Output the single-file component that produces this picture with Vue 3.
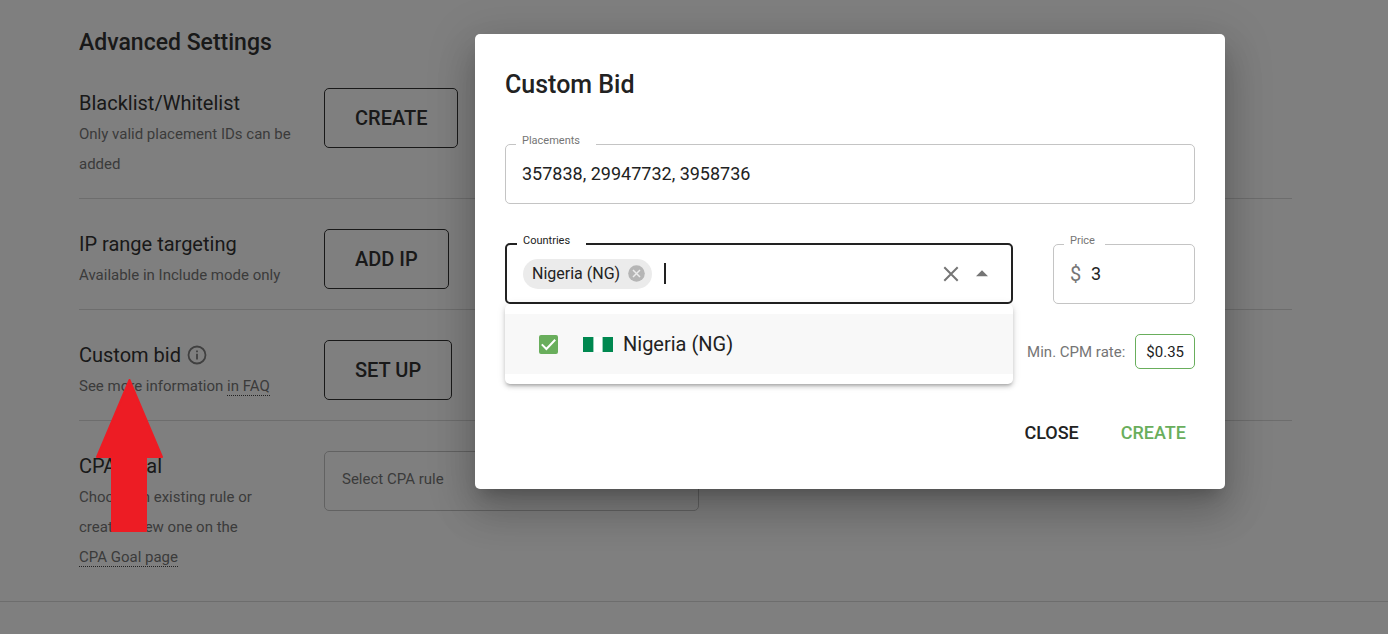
<script setup>
import { ref } from 'vue'

const placements = ref('357838, 29947732, 3958736')
const search = ref('')
const price = ref('3')
const checked = ref(true)
</script>

<template>
  <div class="page">
    <main class="settings">
      <h1 class="heading">Advanced Settings</h1>

      <section class="row">
        <div class="about">
          <h2>Blacklist/Whitelist</h2>
          <p>Only valid placement IDs can be added</p>
        </div>
        <button class="outlined" type="button">CREATE</button>
      </section>

      <section class="row">
        <div class="about">
          <h2>IP range targeting</h2>
          <p>Available in Include mode only</p>
        </div>
        <button class="outlined" type="button">ADD IP</button>
      </section>

      <section class="row">
        <div class="about">
          <h2>
            Custom bid
            <svg class="info" viewBox="0 0 20 20" aria-hidden="true">
              <circle cx="10" cy="10" r="8.5" fill="none" stroke="currentColor" stroke-width="1.8" />
              <path d="M9.1 5.4h1.8v1.8H9.1zM9.1 8.8h1.8v5.6H9.1z" fill="currentColor" />
            </svg>
          </h2>
          <p>See more information <a href="#faq">in FAQ</a></p>
        </div>
        <button class="outlined" type="button">SET UP</button>
      </section>

      <section class="row last">
        <div class="about">
          <h2>CPA Goal</h2>
          <p>Choose an existing rule or create a new one on the <a href="#cpa">CPA Goal page</a></p>
        </div>
        <select class="rule" aria-label="CPA rule">
          <option>Select CPA rule</option>
        </select>
      </section>
    </main>
    <hr class="end" />

    <div class="overlay">
      <form class="dialog" role="dialog" aria-labelledby="dialog-title" @submit.prevent>
        <h2 id="dialog-title" class="title">Custom Bid</h2>

        <div class="field">
          <label for="placements">Placements</label>
          <input id="placements" v-model="placements" type="text" />
        </div>

        <div class="fields">
          <div class="field active">
            <label for="countries">Countries</label>
            <span class="chip">
              Nigeria (NG)
              <button type="button" aria-label="Remove Nigeria">
                <svg viewBox="0 0 17 17">
                  <circle cx="8.5" cy="8.5" r="8.3" fill="#b5b5b5" />
                  <path d="M5 5l7 7M12 5l-7 7" stroke="#ebebeb" stroke-width="1.5" />
                </svg>
              </button>
            </span>
            <span class="cursor"></span>
            <input id="countries" v-model="search" type="text" autocomplete="off" />
            <button class="tool" type="button" aria-label="Clear">
              <svg width="16" height="16" viewBox="0 0 16 16">
                <path d="M1.3 1.3l13.4 13.4M14.7 1.3L1.3 14.7" stroke="#757575" stroke-width="2" />
              </svg>
            </button>
            <button class="tool" type="button" aria-label="Close list">
              <svg width="12" height="16" viewBox="0 0 12 16">
                <path d="M0 10.3L6 4.3l6 6z" fill="#757575" />
              </svg>
            </button>
            <div class="menu">
              <label class="option">
                <span class="box">
                  <input v-model="checked" type="checkbox" />
                  <svg v-if="checked" viewBox="0 0 19 19" aria-hidden="true">
                    <path d="M2.8 9.4l4.6 4.6 8.8-9.2" fill="none" stroke="#fff" stroke-width="2" />
                  </svg>
                </span>
                <svg class="flag" viewBox="0 0 30 15" aria-hidden="true">
                  <path d="M0 0h30v15H0z" fill="#fff" />
                  <path d="M0 0h10.4v15H0zM19.6 0H30v15H19.6z" fill="#008850" />
                </svg>
                Nigeria (NG)
              </label>
            </div>
          </div>

          <div class="field price">
            <label for="price">Price</label>
            <span class="dollar">$</span>
            <input id="price" v-model="price" type="text" />
          </div>
        </div>

        <div class="rate">
          <span>Min. CPM rate:</span>
          <button type="button">$0.35</button>
        </div>

        <div class="actions">
          <button type="button">CLOSE</button>
          <button type="submit" class="primary">CREATE</button>
        </div>
      </form>
    </div>

    <svg class="arrow" viewBox="0 0 67 153" aria-hidden="true">
      <path
        d="M33.5 1L66 78H50v74H16V78H1z"
        fill="#ed1c24"
        stroke="#ed1c24"
        stroke-width="2"
        stroke-linejoin="round"
      />
    </svg>
  </div>
</template>

<style>
body {
  background: #fff;
}
</style>

<style scoped>
.page {
  position: relative;
  min-height: 100vh;
  overflow: hidden;
  background: #fff;
  color: #222;
  font-family: Roboto, "Liberation Sans", sans-serif;
}

.page * {
  box-sizing: border-box;
}

button,
input,
select {
  margin: 0;
  padding: 0;
  border: 0;
  background: none;
  color: inherit;
  font: inherit;
}

svg {
  display: block;
}

.settings {
  padding: 27px 96px 0 79px;
}

.heading {
  margin: 0;
  font-size: 23px;
  font-weight: 500;
  line-height: 31px;
  color: #333;
}

.row {
  display: grid;
  grid-template-columns: 215px 1fr;
  column-gap: 30px;
  align-items: start;
  justify-items: start;
  padding: 30px 0 19px;
  border-bottom: 1px solid #dadada;
}

.row.last {
  padding-bottom: 29px;
  border-bottom: 0;
}

.about h2 {
  display: flex;
  align-items: center;
  gap: 6px;
  margin: 0;
  font-size: 20px;
  font-weight: 400;
  line-height: 30px;
  color: #333;
}

.about p {
  margin: 1px 0 0;
  font-size: 15px;
  line-height: 30px;
  color: #777;
}

.about a {
  border-bottom: 1px dotted #444;
  color: inherit;
  text-decoration: none;
  white-space: nowrap;
}

.info {
  width: 20px;
  height: 20px;
  color: #808080;
}

.outlined {
  height: 60px;
  padding: 0 30px;
  border: 1px solid #333;
  border-radius: 5px;
  font-size: 20px;
  font-weight: 500;
  color: #333;
}

.rule {
  width: 375px;
  height: 60px;
  padding: 0 17px 4px;
  border: 1px solid #c4c4c4;
  border-radius: 5px;
  appearance: none;
  font-size: 15px;
  color: #777;
}

.end {
  height: 1px;
  margin: 0;
  border: 0;
  background: #dadada;
}

.overlay {
  position: absolute;
  inset: 0;
  display: flex;
  align-items: flex-start;
  justify-content: flex-end;
  padding: 34px 163px 0 16px;
  background: rgba(0, 0, 0, 0.5);
}

.dialog {
  width: 750px;
  padding: 31px 30px 34px;
  border-radius: 5px;
  background: #fff;
  box-shadow:
    0 11px 15px -7px rgba(0, 0, 0, 0.2),
    0 24px 38px 3px rgba(0, 0, 0, 0.14),
    0 9px 46px 8px rgba(0, 0, 0, 0.12);
}

.title {
  margin: 0 0 39px;
  font-size: 25px;
  font-weight: 500;
  line-height: 40px;
}

.field {
  position: relative;
  display: flex;
  align-items: center;
  height: 60px;
  padding: 0 16px;
  border: 1px solid #c4c4c4;
  border-radius: 5px;
  font-size: 18px;
}

.field > label {
  position: absolute;
  top: -11px;
  left: 10px;
  padding: 0 16px 0 6px;
  background: #fff;
  font-size: 11px;
  line-height: 14px;
  color: #757575;
}

.field > input {
  flex: 1;
  min-width: 0;
  height: 40px;
  padding-bottom: 2px;
  outline: 0;
}

.fields {
  display: grid;
  grid-template-columns: 1fr 142px;
  gap: 40px;
  align-items: end;
  margin-top: 39px;
}

.field.active {
  height: 61px;
  border: 2px solid #222;
}

.field.active > label {
  color: #222;
}

.chip {
  display: flex;
  align-items: center;
  gap: 8px;
  height: 30px;
  padding: 0 7px 0 9px;
  border-radius: 15px;
  background: #ebebeb;
  font-size: 16px;
}

.chip svg {
  width: 17px;
  height: 17px;
}

.cursor {
  width: 2px;
  height: 21px;
  margin-left: 12px;
  background: #222;
}

.tool {
  margin-left: 17px;
}

.tool:last-of-type {
  margin-right: 7px;
}

.menu {
  position: absolute;
  top: calc(100% + 2px);
  left: -2px;
  right: -2px;
  padding: 10px 0;
  border-radius: 5px;
  background: #fff;
  box-shadow:
    0 3px 3px -2px rgba(0, 0, 0, 0.2),
    0 3px 4px 0 rgba(0, 0, 0, 0.14),
    0 1px 8px 0 rgba(0, 0, 0, 0.12);
}

.option {
  display: flex;
  align-items: center;
  height: 60px;
  padding: 0 34px;
  background: #f8f8f8;
  font-size: 20px;
}

.box {
  position: relative;
  width: 19px;
  height: 19px;
}

.box input {
  display: block;
  width: 19px;
  height: 19px;
  border: 2px solid #69ae5c;
  border-radius: 2px;
  appearance: none;
}

.box input:checked {
  background: #69ae5c;
}

.box svg {
  position: absolute;
  inset: 0;
  pointer-events: none;
}

.flag {
  width: 30px;
  height: 15px;
  margin: 0 10px 0 25px;
}

.price > label {
  padding-right: 10px;
}

.dollar {
  width: 21px;
  font-size: 20px;
  color: #757575;
}

.rate {
  display: flex;
  align-items: center;
  justify-content: flex-end;
  gap: 10px;
  margin-top: 30px;
  font-size: 15px;
  color: #757575;
}

.rate button {
  height: 35px;
  padding: 0 10px;
  border: 1px solid #69ae5c;
  border-radius: 5px;
  color: #222;
}

.actions {
  display: flex;
  justify-content: flex-end;
  gap: 42px;
  margin-top: 41px;
  padding-right: 9px;
  font-size: 18px;
  font-weight: 500;
}

.actions button {
  height: 45px;
}

.actions .primary {
  color: #69ae5c;
}

.arrow {
  position: absolute;
  top: 379px;
  left: 96px;
  width: 67px;
  height: 153px;
}
</style>
